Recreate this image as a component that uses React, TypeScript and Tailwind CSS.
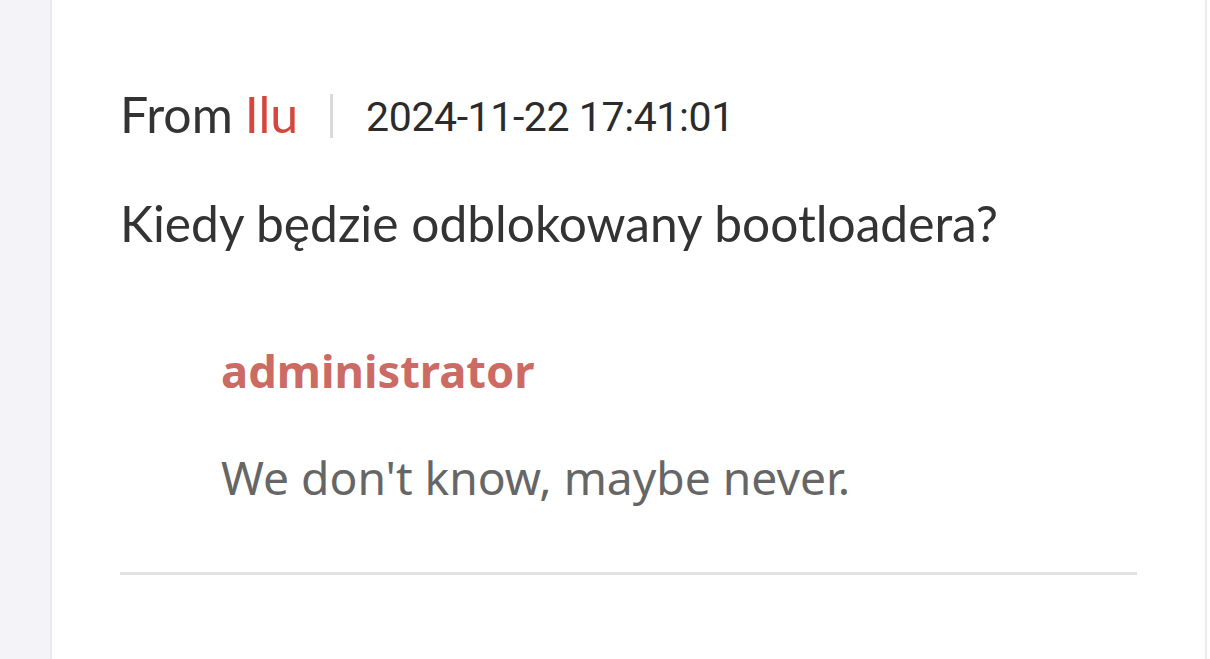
export default function App() {
  return (
    <div className="flex h-screen w-full bg-white overflow-hidden">
      <div className="w-[52px] shrink-0 bg-[#f4f4f8] border-r-2 border-[#e9e9ee]" />
      <div className="flex-1 border-r-2 border-[#ececec] px-[68px] pt-[84px]">
        <div className="flex items-center h-[60px] font-['Lato',sans-serif] text-[50px] text-[#333333]">
          <span>From</span>
          <span className="ml-[12px] text-[#d6463c]">Ilu</span>
          <span className="ml-[32px] mt-[4px] w-[3px] h-[44px] bg-[#d9d9d9]" />
          <span className="ml-[33px] mt-[7px] font-['Roboto',sans-serif] text-[41px] tracking-[-0.4px] text-[#2b2b2b]">
            2024-11-22 17:41:01
          </span>
        </div>
        <p className="mt-[49px] h-[60px] leading-[60px] font-['Lato',sans-serif] text-[49.7px] text-[#333333]">
          Kiedy będzie odblokowany bootloadera?
        </p>
        <div className="pl-[101px] pt-[90px]">
          <p className="h-[56px] leading-[56px] font-['Noto_Sans',sans-serif] font-bold text-[45.3px] text-[#cc6b63]">
            administrator
          </p>
          <p className="mt-[51px] h-[56px] leading-[56px] font-['Noto_Sans',sans-serif] text-[46.2px] text-[#666666]">
            We don't know, maybe never.
          </p>
        </div>
        <div className="mt-[66px] h-[3px] bg-[#e2e2e2]" />
      </div>
      <div className="w-[3px] shrink-0 bg-white" />
    </div>
  );
}
